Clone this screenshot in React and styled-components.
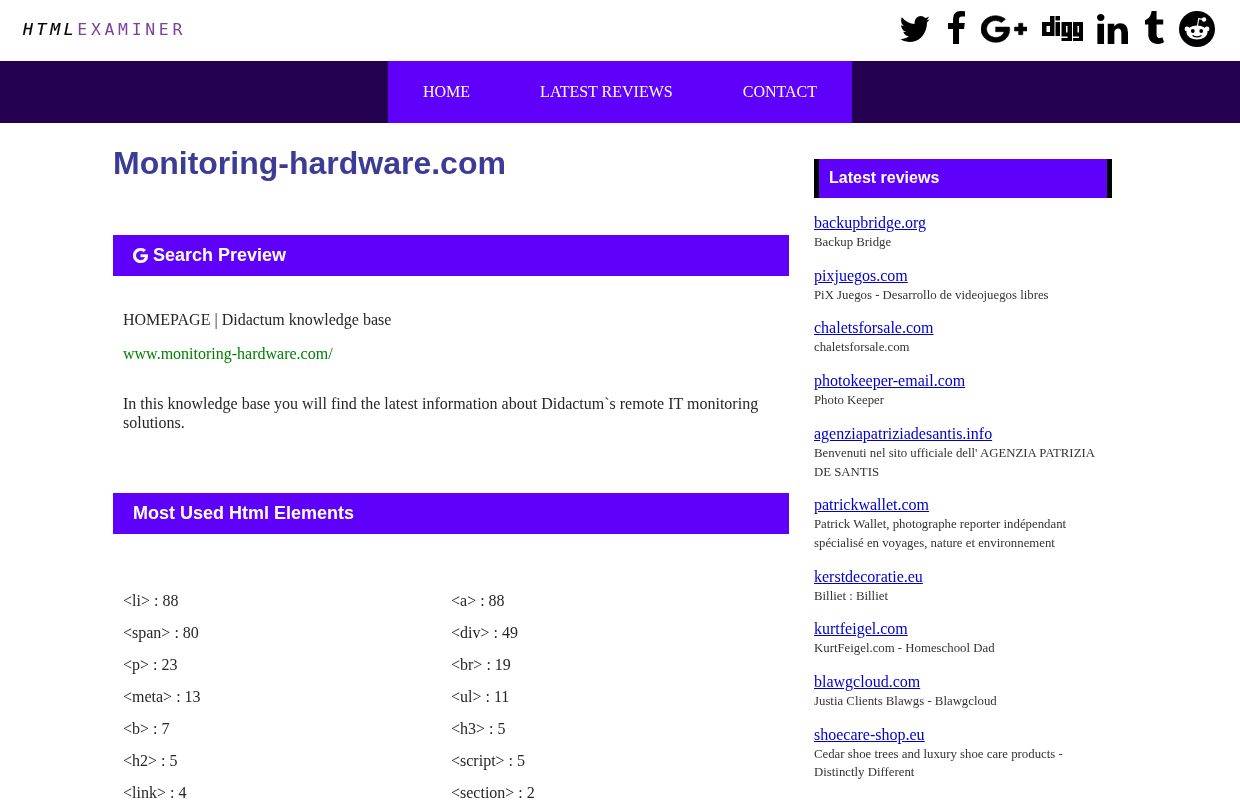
import React from "react";
import styled, { createGlobalStyle } from "styled-components";

const Global = createGlobalStyle`
  html, body { margin: 0; padding: 0; background: #fff; height: 800px; overflow: hidden; }
  body { font-family: "Liberation Serif", "Times New Roman", serif; font-size: 16px; color: #262626; }
  #root { will-change: transform; }
`;
const Header = styled.header`
  height: 61px; display: flex; justify-content: space-between; align-items: flex-start;
  padding: 0 25px 0 23px; box-sizing: border-box;
`;
const Logo = styled.div`
  font-family: "DejaVu Sans Mono", monospace; font-size: 16.5px; line-height: 20px; margin-top: 19.5px;
  letter-spacing: 3.65px; white-space: nowrap;
`;
const LogoDark = styled.span` color: #000; font-style: italic; -webkit-text-stroke: 0.2px #000; `;
const LogoLight = styled.span` color: #7d4299; `;
const Social = styled.div` display: flex; align-items: flex-start; color: #000; `;
const Glyph = styled.svg`
  display: block; flex: none; fill: currentColor; stroke: currentColor; stroke-width: ${(p) => p.$sw || 0};
  width: ${(p) => p.$w}px; height: ${(p) => p.$h}px;
  margin-top: ${(p) => p.$top}px; margin-left: ${(p) => p.$left}px;
`;
const Nav = styled.nav` height: 62px; background: #240050; display: flex; justify-content: center; `;
const NavInner = styled.div` background: #5f00fb; display: flex; align-items: center; padding: 0 35px; gap: 70px; `;
const NavLink = styled.a` color: #fff; font-size: 16px; text-decoration: none; `;
const Page = styled.div` display: flex; padding-left: 113px; gap: 25px; `;
const Main = styled.main` width: 676px; flex: none; `;
const Title = styled.h1`
  font-family: "Liberation Sans", Arial, sans-serif; font-size: 32px; line-height: 38px; margin: 21px 0 53px; color: #3c3c96; font-weight: 700;
`;
const Bar = styled.h2`
  margin: 0; height: 41px; background: #5f00fb; color: #fff; display: flex; align-items: center; gap: 5px;
  padding-left: 20px; font: 700 18px/41px "Liberation Sans", Arial, sans-serif;
`;
const GIcon = styled.svg` width: 15px; height: 15px; fill: currentColor; stroke: currentColor; stroke-width: 30; flex: none; `;
const Preview = styled.section` padding: 34px 10px 0; height: 217px; box-sizing: border-box; line-height: 19px; `;
const PText = styled.p` margin: 0; `;
const Url = styled.p` margin: 15px 0 31px; color: #008000; `;
const Grid = styled.div` display: grid; grid-template-columns: 328px 1fr; padding: 51px 10px 0; `;
const Cell = styled.div` height: 32px; line-height: 32px; white-space: nowrap; `;
const Side = styled.aside` width: 298px; padding-top: 36px; flex: none; `;
const SideHead = styled.h3`
  margin: 0 0 15px; height: 39px; box-sizing: border-box; background: #5f00fb; color: #fff; border-left: 5px solid #000; border-right: 5px solid #000;
  padding-left: 10px; font: 700 16px/38px "Liberation Sans", Arial, sans-serif;
`;
const Review = styled.div` margin-bottom: 14.15px; padding-right: 10px; `;
const RLink = styled.a` display: block; color: #0000cc; text-decoration: underline; font-size: 16px; line-height: 19px; `;
const RDesc = styled.div` font-size: 12.8px; line-height: 18.6px; padding-top: 1px; color: #333; `;

const icons = [
  { w: 31, h: 26, top: 16, left: 0, vb: "64 256 1620 1280", d: "M1684 408q-67 98-162 167 1 14 1 42 0 130-38 259.500t-115.500 248.500-184.500 210.500-258 146-323 54.500q-271 0-496-145 35 4 78 4 225 0 401-138-105-2-188-64.500t-114-159.500q33 5 61 5 43 0 85-11-112-23-185.500-111.500t-73.500-205.500v-4q68 38 146 41-66-44-105-115t-39-154q0-88 44-163 121 149 294.500 238.500t371.500 99.500q-8-38-8-74 0-134 94.500-228.500t228.500-94.500q140 0 236 102 109-21 200-76-35 110-138 181 90-10 180-49z" },
  { w: 17, h: 33, top: 11, left: 18, vb: "479 0 864 1664", d: "M1343 12v264h-157q-86 0-116 36t-30 108v189h293l-39 296h-254v759h-306v-759h-255v-296h255v-218q0-186 104-288.500t277-102.500q147 0 228 12z" },
  { w: 46, h: 28, top: 15, left: 16, sw: 30, vb: "-256 128 2304 1536", d: "M1181 913q0 208-87 370.500t-248 254-369 91.500q-149 0-285-58t-234-156-156-234-58-285 58-285 156-234 234-156 285-58q286 0 491 192l-199 191q-117-113-292-113-123 0-227.500 62t-165.500 168.500-61 232.500 61 232.500 165.500 168.500 227.500 62q83 0 152.500-23t114.500-57.500 78.500-78.500 49-83 21.500-74h-416v-252h692q12 63 12 122zm867-122v210h-209v209h-210v-209h-209v-210h209v-209h210v209h209z" },
  { w: 41, h: 25, top: 16, left: 15, vb: "0 0 41 25", rule: "evenodd", d: "M8 0h4.500v20H0V6h8zM4.500 10v6h3.500v-6zM13.500 6H18v14h-4.500zM13.500 0H18v4.500h-4.500zM19.500 6H30v19H19.500v-3H25.500v-1.500H19.500zM24 10v6.500H25.500v-6.500zM31 6H41v19H31v-3H37v-1.500H31zM35.500 10v6.500H37v-6.500z" },
  { w: 31, h: 30, top: 14, left: 14, vb: "128 148 1536 1468", d: "M477 625v991h-330v-991h330zm21-306q1 73-50.500 122t-135.500 49h-2q-82 0-132-49t-50-122q0-74 51.500-122.500t134.500-48.500 133 48.500 51 122.500zm1166 729v568h-329v-530q0-105-40.500-164.500t-126.500-59.500q-63 0-105.500 34.500t-63.500 85.500q-11 30-11 81v553h-329q2-399 2-647t-1-296l-1-48h329v144h-2q20-32 41-56t56.500-52 87-43.500 114.500-15.500q171 0 275 113.500t104 332.500z" },
  { w: 19, h: 33, top: 11, left: 17, vb: "452 0 956 1664", d: "M1328 1329l80 237q-23 35-111 66t-177 32q-104 2-190.500-26t-142.500-74-95-106-55.500-120-16.500-118v-544h-168v-215q72-26 129-69.500t91-90 58-102 34-99 15-88.500q1-5 4.500-8.500t7.500-3.500h244v424h333v252h-334v518q0 30 6.500 56t22.500 52.500 49.500 41.500 81.500 14q78-2 134-29z" },
];

const reviews = [
  ["backupbridge.org", "Backup Bridge"],
  ["pixjuegos.com", "PiX Juegos - Desarrollo de videojuegos libres"],
  ["chaletsforsale.com", "chaletsforsale.com"],
  ["photokeeper-email.com", "Photo Keeper"],
  ["agenziapatriziadesantis.info", "Benvenuti nel sito ufficiale dell' AGENZIA PATRIZIA DE SANTIS"],
  ["patrickwallet.com", "Patrick Wallet, photographe reporter indépendant spécialisé en voyages, nature et environnement"],
  ["kerstdecoratie.eu", "Billiet : Billiet"],
  ["kurtfeigel.com", "KurtFeigel.com - Homeschool Dad"],
  ["blawgcloud.com", "Justia Clients Blawgs - Blawgcloud"],
  ["shoecare-shop.eu", "Cedar shoe trees and luxury shoe care products - Distinctly Different"],
];
const els = ["<li> : 88","<a> : 88","<span> : 80","<div> : 49","<p> : 23","<br> : 19","<meta> : 13","<ul> : 11","<b> : 7","<h3> : 5","<h2> : 5","<script> : 5","<link> : 4","<section> : 2"];

export default function App() {
  return (
    <>
      <Global />
      <Header>
        <Logo><LogoDark>HTML</LogoDark><LogoLight>EXAMINER</LogoLight></Logo>
        <Social>
          {icons.map((i) => (
            <Glyph key={i.vb} $w={i.w} $h={i.h} $top={i.top} $left={i.left} $sw={i.sw} viewBox={i.vb} preserveAspectRatio="none">
              <path d={i.d} fillRule={i.rule} />
            </Glyph>
          ))}
          <Glyph $w={36} $h={36} $top={11} $left={15} viewBox="0 0 36 36">
            <circle cx="18" cy="18" r="18" />
            <g fill="#fff" stroke="none">
              <circle cx="8" cy="18" r="2.4" />
              <circle cx="28" cy="18" r="2.4" />
              <ellipse cx="18" cy="21.5" rx="10.5" ry="7" />
              <circle cx="25" cy="8.5" r="2.2" />
            </g>
            <path d="M18.5 15 L19.7 7.6 L24 8.4" fill="none" stroke="#fff" strokeWidth="1.1" />
            <g stroke="none">
              <circle cx="13.8" cy="20" r="1.9" />
              <circle cx="22.2" cy="20" r="1.9" />
            </g>
            <path d="M13.5 24.4 Q18 27.4 22.5 24.4" fill="none" stroke="#000" strokeWidth="1.2" />
          </Glyph>
        </Social>
      </Header>
      <Nav>
        <NavInner>
          <NavLink>HOME</NavLink>
          <NavLink>LATEST REVIEWS</NavLink>
          <NavLink>CONTACT</NavLink>
        </NavInner>
      </Nav>
      <Page>
        <Main>
          <Title>Monitoring-hardware.com</Title>
          <Bar>
            <GIcon viewBox="128 128 1505 1536" preserveAspectRatio="none">
              <path d="M896 786h725q12 67 12 128 0 217-91 387.500t-259.500 266.500-386.500 96q-157 0-299-60.500t-245-163.500-163.500-245-60.500-299 60.500-299 163.500-245 245-163.500 299-60.500q300 0 515 201l-209 201q-123-119-306-119-129 0-238.500 65t-173.500 176.500-64 243.500 64 243.500 173.500 176.500 238.500 65q87 0 160-24t120-60 82-82 51.500-87 22.500-78h-436v-264z" />
            </GIcon>
            Search Preview
          </Bar>
          <Preview>
            <PText>HOMEPAGE | Didactum knowledge base</PText>
            <Url>www.monitoring-hardware.com/</Url>
            <PText>In this knowledge base you will find the latest information about Didactum`s remote IT monitoring solutions.</PText>
          </Preview>
          <Bar>Most Used Html Elements</Bar>
          <Grid>{els.map((e) => <Cell key={e}>{e}</Cell>)}</Grid>
        </Main>
        <Side>
          <SideHead>Latest reviews</SideHead>
          {reviews.map(([a, b]) => (
            <Review key={a}><RLink>{a}</RLink><RDesc>{b}</RDesc></Review>
          ))}
        </Side>
      </Page>
    </>
  );
}
